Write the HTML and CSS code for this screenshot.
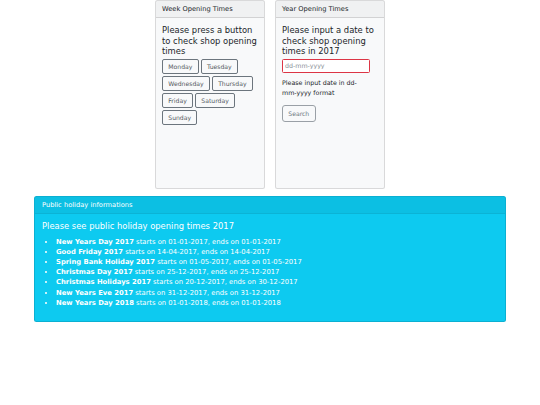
FILE: index.html
```html
<!DOCTYPE html>
<html>
<head>
<meta charset="utf-8">
<link rel="stylesheet" href="styles.css">
</head>
<body>
<div class="top-row">
  <div class="card light">
    <div class="card-header">Week Opening Times</div>
    <div class="card-body">
      <h5 class="title">Please press a button to check shop opening times</h5>
      <div class="btn-row"><button class="btn">Monday</button><button class="btn">Tuesday</button></div>
      <div class="btn-row"><button class="btn">Wednesday</button><button class="btn">Thursday</button></div>
      <div class="btn-row"><button class="btn">Friday</button><button class="btn">Saturday</button></div>
      <div class="btn-row"><button class="btn">Sunday</button></div>
    </div>
  </div>
  <div class="card light">
    <div class="card-header">Year Opening Times</div>
    <div class="card-body">
      <h5 class="title">Please input a date to check shop opening times in 2017</h5>
      <form class="date-form">
        <input class="date-input" type="text" placeholder="dd-mm-yyyy">
        <p class="hint">Please input date in dd-mm-yyyy format</p>
        <button class="btn btn-search" type="button">Search</button>
      </form>
    </div>
  </div>
</div>
<div class="card info">
  <div class="card-header">Public holiday informations</div>
  <div class="card-body">
    <h5 class="title">Please see public holiday opening times 2017</h5>
    <ul class="holidays">
      <li><b>New Years Day 2017</b> starts on 01-01-2017, ends on 01-01-2017</li>
      <li><b>Good Friday 2017</b> starts on 14-04-2017, ends on 14-04-2017</li>
      <li><b>Spring Bank Holiday 2017</b> starts on 01-05-2017, ends on 01-05-2017</li>
      <li><b>Christmas Day 2017</b> starts on 25-12-2017, ends on 25-12-2017</li>
      <li><b>Christmas Holidays 2017</b> starts on 20-12-2017, ends on 30-12-2017</li>
      <li><b>New Years Eve 2017</b> starts on 31-12-2017, ends on 31-12-2017</li>
      <li><b>New Years Day 2018</b> starts on 01-01-2018, ends on 01-01-2018</li>
    </ul>
  </div>
</div>
</body>
</html>
```
FILE: styles.css
```css
html, body {
  margin: 0;
  padding: 0;
  background: #fff;
}
body {
  font-family: "DejaVu Sans", sans-serif;
  font-size: 7px;
  line-height: 1.5;
  color: #212529;
}
.top-row {
  display: flex;
  justify-content: center;
  gap: 10px;
}
.card {
  border: 1px solid rgba(0, 0, 0, 0.125);
  border-radius: 2.5px;
  box-sizing: border-box;
  overflow: hidden;
}
.card.light {
  width: 110px;
  height: 189px;
  background: #f8f9fa;
}
.card-header {
  padding: 3.5px 6px;
  background: rgba(0, 0, 0, 0.03);
  border-bottom: 1px solid rgba(0, 0, 0, 0.125);
  font-size: 6.7px;
  line-height: 9px;
}
.card-body {
  padding: 7px 6px;
}
.title {
  margin: 0 0 2.5px 0;
  font-size: 8.4px;
  font-weight: 500;
  line-height: 10.5px;
}
.btn-row {
  display: flex;
  gap: 2px;
  margin-bottom: 2px;
}
.btn {
  font-family: "DejaVu Sans", sans-serif;
  font-size: 6.125px;
  line-height: 9px;
  padding: 2px 5.25px;
  border: 1px solid #6c757d;
  border-radius: 2px;
  background: transparent;
  color: #555a5f;
  margin: 0;
}
.date-form {
  width: 88px;
  margin: 0;
}
.date-input {
  display: block;
  box-sizing: border-box;
  width: 88px;
  height: 13.5px;
  margin: 0;
  padding: 1px 2px;
  font-family: "DejaVu Sans", sans-serif;
  font-size: 6.3px;
  border: 1px solid #dc3545;
  border-radius: 1.5px;
  background: #fff;
  outline: none;
}
.date-input::placeholder {
  color: #8a9098;
}
.hint {
  margin: 5px 0 7px 0;
  font-size: 6.3px;
  line-height: 10px;
}
.btn-search {
  padding: 3px 5.25px;
  color: #6c757d;
  border-color: #9aa0a6;
  border-radius: 3px;
}
.card.info {
  margin: 7px 34px 0 34px;
  background: #0dcaf0;
  color: #fff;
}
.card.info .card-header {
  padding: 3.5px 7px;
  background: rgba(0, 0, 0, 0.05);
  border-bottom: 1px solid rgba(0, 0, 0, 0.06);
}
.card.info .card-body {
  padding: 7px;
}
.card.info .title {
  margin-bottom: 5px;
}
.holidays {
  margin: 0 0 6px 0;
  padding-left: 14px;
  font-size: 6.8px;
  line-height: 10.2px;
}
.holidays b {
  font-weight: bold;
}
```
